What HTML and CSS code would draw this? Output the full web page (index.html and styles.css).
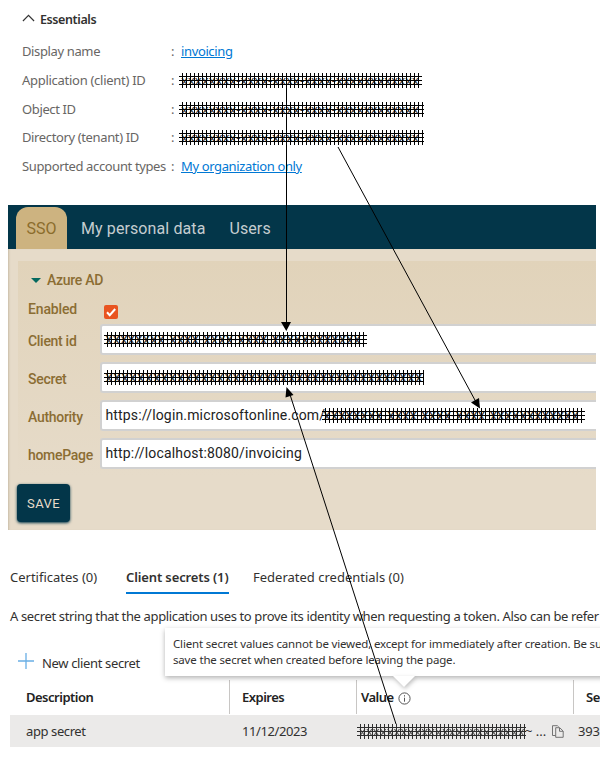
FILE: index.html
```html
<!DOCTYPE html>
<html lang="en">
<head>
<meta charset="utf-8">
<title>SSO configuration</title>
<link rel="stylesheet" href="styles.css">
</head>
<body>
<main class="page">
  <section class="essentials">
    <h2 class="ess-title"><svg class="chevron" viewBox="0 0 14 8"><path d="M1 7.2L7 1.2l6 6"/></svg><span>Essentials</span></h2>
    <div class="ess-row"><span class="ess-label">Display name</span><span class="colon">:</span><a class="link">invoicing</a></div>
    <div class="ess-row"><span class="ess-label">Application (client) ID</span><span class="colon">:</span><span class="masked m1">xxxxxxxx-xxxx-xxxx-xxxx-xxxxxxxxxxxx</span></div>
    <div class="ess-row"><span class="ess-label">Object ID</span><span class="colon">:</span><span class="masked m2">xxxxxxxx-xxxx-xxxx-xxxx-xxxxxxxxxxxx</span></div>
    <div class="ess-row"><span class="ess-label">Directory (tenant) ID</span><span class="colon">:</span><span class="masked m3">xxxxxxxx-xxxx-xxxx-xxxx-xxxxxxxxxxxx</span></div>
    <div class="ess-row"><span class="ess-label">Supported account types</span><span class="colon">:</span><a class="link">My organization only</a></div>
  </section>

  <section class="app">
    <nav class="app-tabs"><span class="app-tab active">SSO</span><span class="app-tab personal">My personal data</span><span class="app-tab">Users</span></nav>
    <div class="app-body">
      <div class="group">
        <h3 class="group-title"><i class="caret"></i>Azure AD</h3>
        <div class="enabled"><span>Enabled</span><span class="check"><svg viewBox="0 0 14 14"><path d="M3 7.3l2.7 2.9L11.2 4"/></svg></span></div>
        <div class="field"><label>Client id</label><div class="input"><span class="masked m4">xxxxxxxx-xxxx-xxxx-xxxx-xxxxxxxxxxxx</span></div></div>
        <div class="field"><label>Secret</label><div class="input"><span class="masked m5">xxxxxxxxxxxxxxxxxxxxxxxxxxxxxxxxxxxxxxxx</span></div></div>
        <div class="field"><label>Authority</label><div class="input"><span class="authority-host">https://login.microsoftonline.com/</span><span class="masked m6">xxxxxxxx-xxxx-xxxx-xxxx-xxxxxxxxxxxx</span></div></div>
        <div class="field"><label>homePage</label><div class="input"><span>http://localhost:8080/invoicing</span></div></div>
      </div>
      <button class="save">SAVE</button>
    </div>
  </section>

  <section class="secrets">
    <nav class="pivots"><span class="p1">Certificates (0)</span><span class="p2">Client secrets (1)</span><span class="p3">Federated credentials (0)</span></nav>
    <p class="intro">A secret string that the application uses to prove its identity when requesting a token. Also can be refer</p>
    <div class="new"><svg viewBox="0 0 16 16"><path d="M8 0v16M0 8h16"/></svg><span>New client secret</span></div>
    <div class="thead"><b class="c1"><span>Description</span></b><b class="c2"><span>Expires</span></b><b class="c3"><span>Value</span><svg viewBox="0 0 13 13"><circle cx="6.5" cy="6.5" r="5.6"/><path d="M6.5 5.7v4M6.5 3.2v1.3"/></svg></b><b class="c4"><span>Se</span></b></div>
    <div class="trow"><span class="c1"><span>app secret</span></span><span class="c2"><span>11/12/2023</span></span><span class="c3"><span class="masked m7">xxxxxxxxxxxxxxxxxxxxxxxx</span><span class="dots">~ ...</span><svg viewBox="0 0 12 13"><path d="M3.5 10.5h-3V.7h5l1 1M3.7 2.7h4l3.5 3.4v6.2H3.7zM7.5 2.9v3.4h3.500"/></svg></span><span class="c4"><span>393</span></span></div>
    <div class="tip">Client secret values cannot be viewed, except for immediately after creation. Be su<br>save the secret when created before leaving the page.<i class="beak"></i></div>
  </section>

  <svg class="arrows" viewBox="0 0 600 757">
    <path class="line" d="M286.5 87V325M338 147L476 402M396 724L289.500 393"/>
    <path class="head" d="M281 322h10l-4.700 9zM471 402.500l8-4.500 1 10.500zM286.500 387l7 8-8 2.500z"/>
  </svg>
</main>
</body>
</html>
```
FILE: styles.css
```css
* { box-sizing: border-box; }
body { margin: 0; background: #fff; font: 13px "Noto Sans", sans-serif; color: #323130; }
h2, h3, p { margin: 0; font-weight: normal; }
.page { position: relative; width: 600px; height: 757px; overflow: hidden; white-space: nowrap; }

.essentials { height: 205px; padding: 8px 0 0 22px; }
.ess-title { display: flex; align-items: center; height: 22px; margin-bottom: 7px; font-size: 12.500px; font-weight: 600; letter-spacing: -.4px; }
.chevron { width: 13px; height: 8px; margin-right: 5px; margin-top: -3px; fill: none; stroke: #333; stroke-width: 1.300; }
.ess-row { display: flex; align-items: center; height: 28.700px; color: #686664; letter-spacing: -.37px; }
.ess-row:nth-child(3) .ess-label { letter-spacing: -.28px; }
.ess-label { width: 149px; }
.colon { width: 10px; }
.link { color: #0078d4; text-decoration: underline; }

.masked { position: relative; display: block; height: 18px; line-height: 18px; color: #333; overflow: visible; }
.masked::after {
  content: ""; position: absolute; left: -2px; right: -1px; top: 2px; height: 15px;
  background:
    linear-gradient(#000, #000) 0 3px / 100% 1px no-repeat,
    linear-gradient(#000, #000) 0 7px / 100% 1px no-repeat,
    linear-gradient(#000, #000) 0 11px / 100% 1px no-repeat,
    repeating-linear-gradient(90deg, transparent 0 3px, #000 3px 4px);
}
.m1, .m2, .m3 { width: 241px; letter-spacing: .03px; }
.m1::after, .m2::after, .m3::after { right: 0; }
.m2, .m3 { width: 243px; }

.app { width: 588px; height: 325px; margin-left: 8px; background: #e6dbc9; font-family: Roboto, sans-serif; }
.app-tabs { display: flex; height: 44px; padding: 2px 0 0 8px; background: #033649; color: #c5cdd0; font-size: 16px; line-height: 43px; letter-spacing: .1px; }
.active { width: 51px; background: #cdb380; color: #8b6d2c; border-radius: 12px 12px 0 0; text-align: center; letter-spacing: 0; }
.personal { margin: 0 24px 0 14px; }
.app-body { height: 281px; padding: 12px 0 0 10px; box-shadow: inset 2px 0 2px -1px #c9bda8; }
.group { height: 215px; padding: 8px 0 0 10px; background: linear-gradient(#e1d3ba, #e6dbc9); color: #8b6d33; font-size: 14px; font-weight: 500; letter-spacing: -.3px; }
.group-title { display: flex; align-items: center; height: 22px; font-size: 14px; font-weight: 500; }
.caret { margin: 0 6px 0 3px; border: 5.500px solid transparent; border-top-color: #04695f; border-bottom: 0; }
.enabled { display: flex; height: 33px; }
.enabled > span:first-child { width: 76px; padding-top: 10px; letter-spacing: -.15px; }
.check { width: 14px; height: 14px; margin-top: 14px; border-radius: 2px; background: #e95420; }
.check svg { display: block; fill: none; stroke: #fff; stroke-width: 2; }
.field { display: flex; height: 31px; margin-bottom: 7px; }
.field label { width: 72px; padding-top: 9px; }
.input { display: flex; flex: 1; align-items: center; padding: 0 0 2px 3.500px; background: #fff; border: 2px solid #d1d1d1; border-right: 0; border-radius: 3px 0 0 3px; color: #222; font-size: 14px; font-weight: 400; letter-spacing: .16px; }
.authority-host { width: 218px; }
.m4 { width: 260px; letter-spacing: .5px; }
.m5 { width: 317px; letter-spacing: 1px; }
.m6 { width: 260px; letter-spacing: .5px; }
.save { display: block; width: 53px; height: 38px; margin: 8px 0 0 -1px; padding: 0; border: 0; border-radius: 4px; background: #033649; color: #e8ddcb; box-shadow: 0 1px 3px #033649; font: 13px Roboto, sans-serif; letter-spacing: .4px; }

.secrets { position: relative; height: 227px; padding: 34px 0 0 10px; }
.pivots { display: flex; height: 30px; line-height: 26px; }
.p1 { width: 116px; }
.p2 { width: 103px; margin-right: 24px; font-weight: 600; letter-spacing: -.12px; border-bottom: 2px solid #0078d4; }
.intro { height: 34px; margin-top: 9px; line-height: 26px; letter-spacing: -.36px; }
.new { display: flex; align-items: center; height: 43px; padding: 8px 0 0 8px; letter-spacing: -.35px; }
.new svg { width: 16px; height: 16px; margin: -3px 8px 0 0; stroke: #69aee5; stroke-width: 1.300; }
.thead, .trow { display: grid; grid-template-columns: 219px 127px 217px 1fr; letter-spacing: -.4px; }
.thead { height: 34px; margin-bottom: 1px; color: #222; }
.thead b { display: flex; align-items: center; font-weight: 600; letter-spacing: -.5px; border-left: 1px solid #c8c6c4; }
.thead .c1 { border: 0; }
.thead svg { width: 13px; margin: 3px 0 0 4px; fill: none; stroke: #555; }
.c1 { padding-left: 16px; }
.c2 { padding-left: 12px; }
.c3 { padding-left: 4px; }
.c4 { padding-left: 12px; }
.trow { height: 32px; background: #ebeae9; align-items: center; }
.trow .c2 { padding-left: 13px; }
.trow .c3 { display: flex; align-items: center; padding-left: 3px; }
.trow .c4 { padding-left: 5px; letter-spacing: -.2px; }
.m7 { width: 166px; letter-spacing: .03px; opacity: .8; }
.dots { width: 27px; white-space: pre; letter-spacing: 0; }
.trow svg { width: 12px; height: 13px; fill: none; stroke: #666; stroke-width: .9; }
.tip { position: absolute; left: 165px; top: 98px; width: 455px; height: 48px; padding: 8px; background: #fff; box-shadow: 0 2px 5px #0000004d; font-size: 11.500px; line-height: 16px; letter-spacing: -.17px; }
.beak { position: absolute; left: 228px; top: 48px; border: 11px solid transparent; border-top-color: #fff; border-bottom: 0; filter: drop-shadow(1px 2px 2px #00000040); }
.arrows { position: absolute; left: 0; top: 0; width: 600px; height: 757px; pointer-events: none; }
.line { fill: none; stroke: #000; stroke-width: 1; }
```
